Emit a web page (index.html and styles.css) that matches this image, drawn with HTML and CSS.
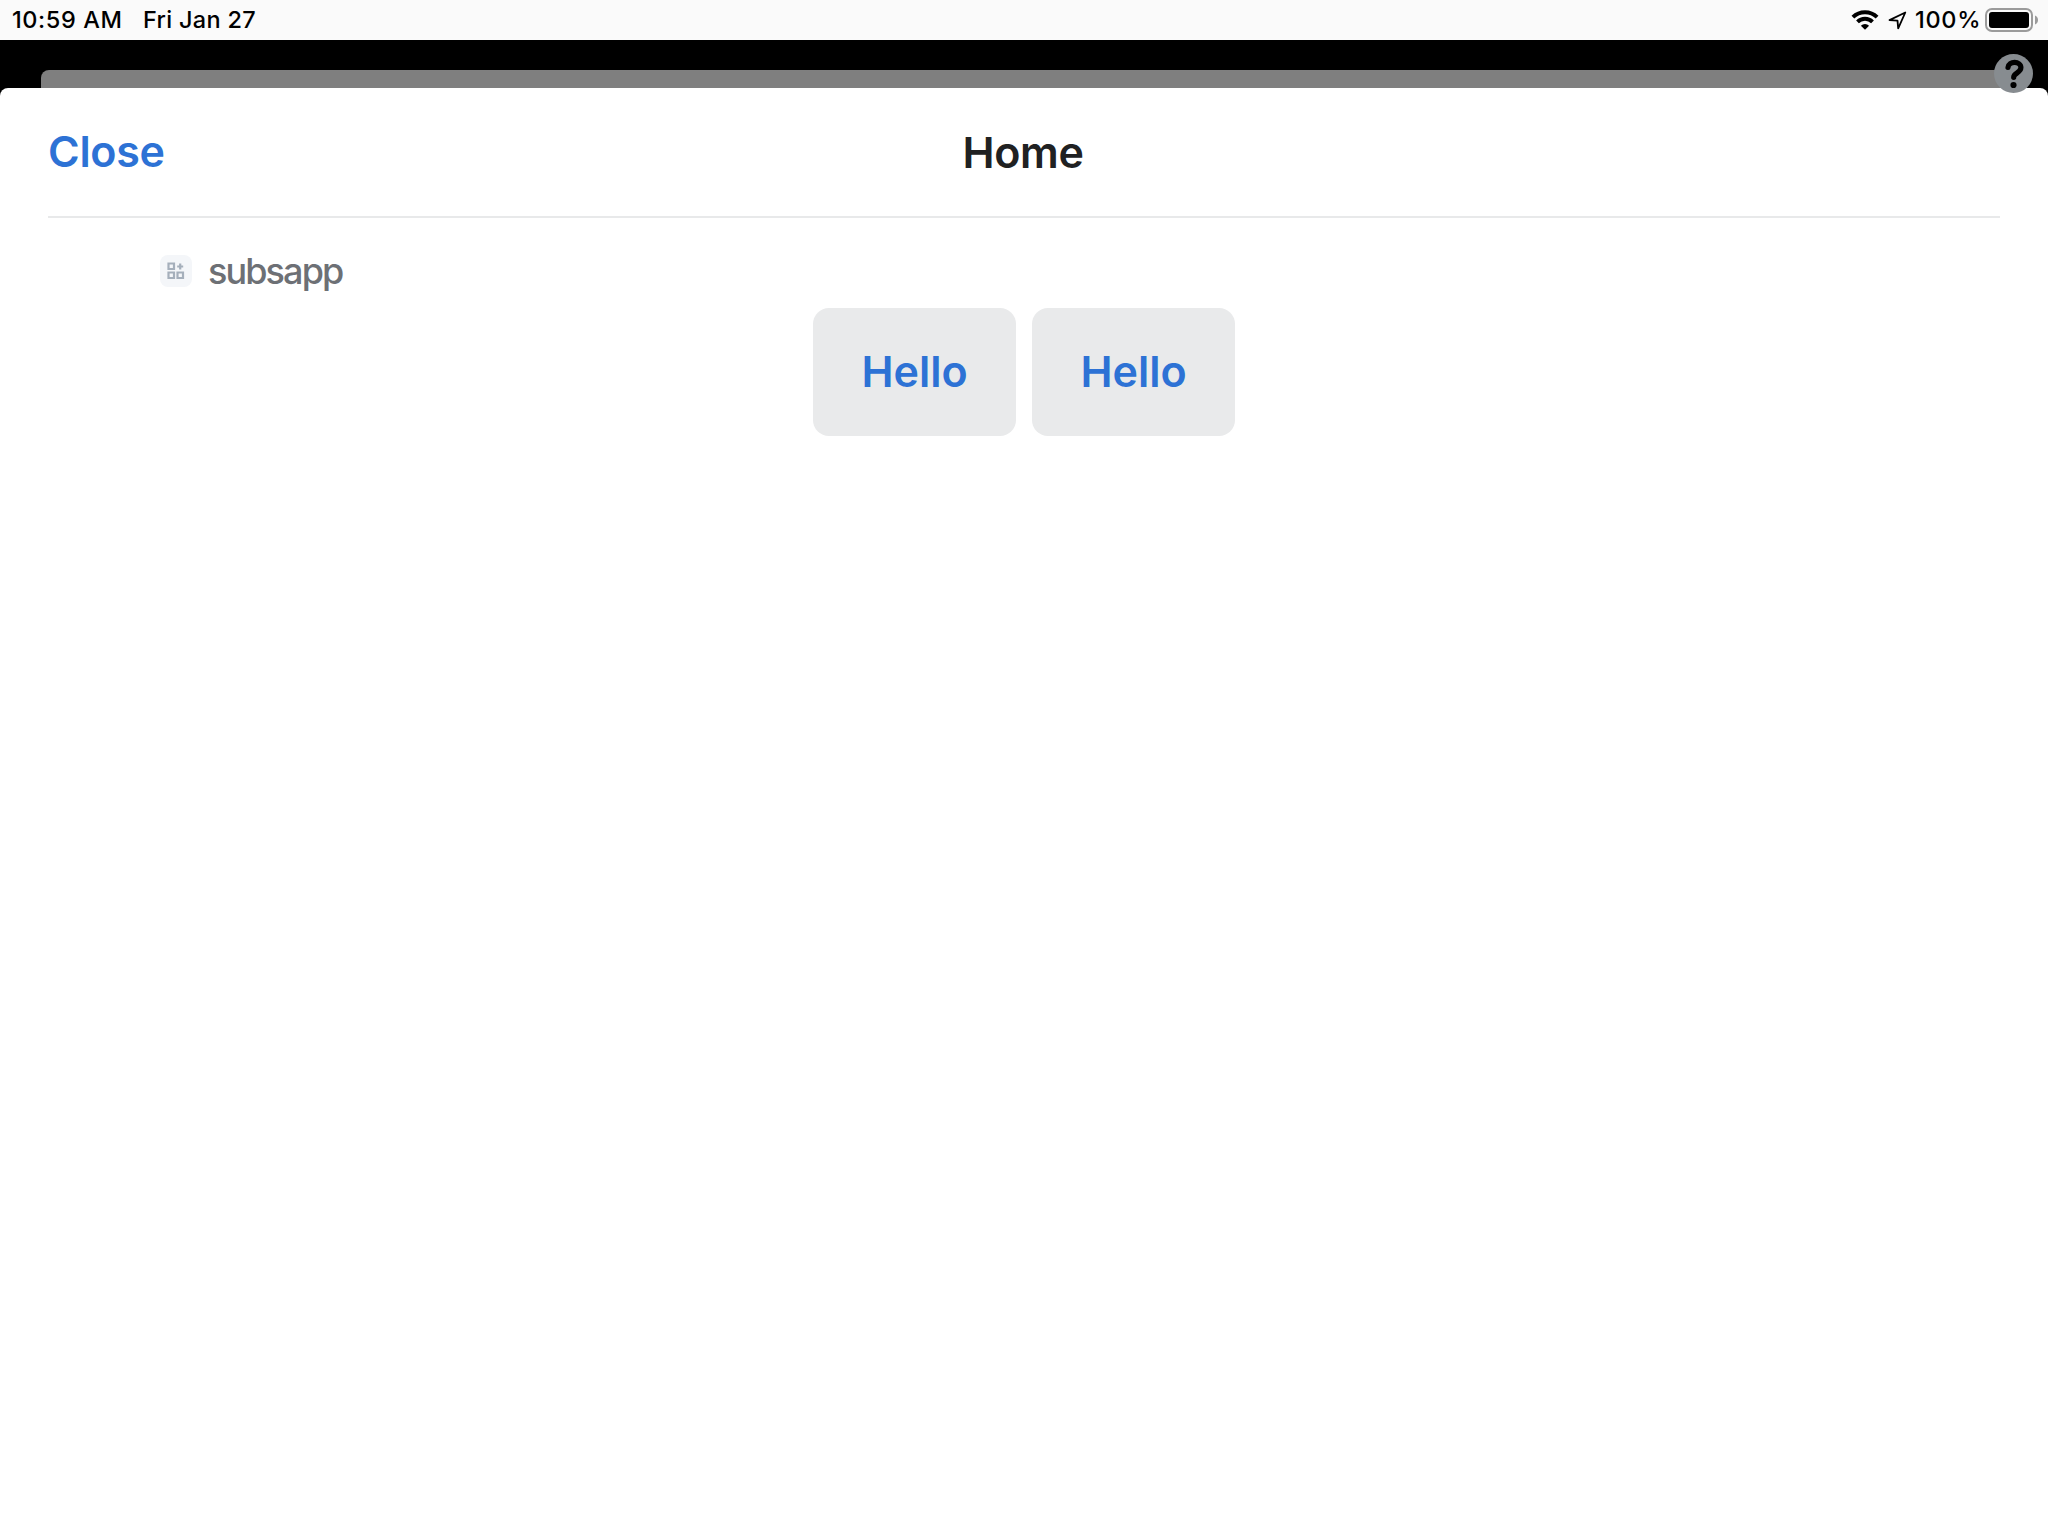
FILE: index.html
```html
<!DOCTYPE html>
<html lang="en">
<head>
<meta charset="utf-8">
<title>Home</title>
<link rel="stylesheet" href="styles.css">
</head>
<body>
<header class="status">
  <span class="time">10:59 AM</span>
  <span class="date">Fri Jan 27</span>
  <svg class="wifi" width="28" height="20" viewBox="0 0 28 20" fill="none" stroke="#000" stroke-width="3.9">
    <path d="M1.9 7.2a17.2 17.2 0 0 1 24.2 0"/>
    <path d="M6.5 11.9a10.6 10.6 0 0 1 15 0"/>
    <path d="M14 19.8l-4.1-4.1a5.8 5.8 0 0 1 8.2 0z" fill="#000" stroke="none"/>
  </svg>
  <svg class="location" width="19" height="19" viewBox="0 0 19 19" fill="none" stroke="#000" stroke-width="1.8" stroke-linejoin="round">
    <path d="M17.3 1.5L1.5 9.1l8 .5.7 7.7z"/>
  </svg>
  <span class="percent">100%</span>
  <svg class="battery" width="53" height="24" viewBox="0 0 53 24">
    <rect x="1" y="1" width="46" height="22" rx="6" fill="none" stroke="#9b9b9b" stroke-width="2"/>
    <rect x="4" y="4" width="40" height="16" rx="3"/>
    <path d="M50 7.500c4 1.500 4 7.500 0 9z" fill="#9b9b9b"/>
  </svg>
</header>
<div class="backdrop">
  <div class="behind"></div>
  <svg class="help" width="39" height="39" viewBox="0 0 39 39">
    <circle cx="19.500" cy="19.500" r="19.500" fill="#878c90"/>
    <path d="M14 13.500C14.500 6.800 26.900 6.700 26.900 13.600c0 5.400-7.200 5.300-7.200 9.700" fill="none" stroke="#000" stroke-width="5.200" stroke-linecap="round"/>
    <circle cx="19.500" cy="31" r="3.100"/>
  </svg>
</div>
<main class="sheet">
  <div class="titlebar">
    <a class="close">Close</a>
    <h1 class="title">Home</h1>
  </div>
  <div class="app">
    <span class="badge">
      <svg width="18" height="18" viewBox="0 0 18 18" fill="none" stroke="#a5afbb" stroke-width="2.200">
        <path d="M1.500 1.500h5.500v5.500h-5.500zM1.500 10.500h5.500v5.500h-5.500zM10.500 10.500h5.500v5.500h-5.500zM13.200 1.500v6M10.200 4.500h6"/>
      </svg>
    </span>
    <span class="app-name">subsapp</span>
  </div>
  <div class="actions">
    <button class="action">Hello</button>
    <button class="action">Hello</button>
  </div>
</main>
</body>
</html>
```
FILE: styles.css
```css
* { box-sizing: border-box; }
body {
  margin: 0;
  height: 1536px;
  display: flex;
  flex-direction: column;
  overflow: hidden;
  background: #000;
  font-family: Inter, "Liberation Sans", sans-serif;
}
.status {
  height: 40px;
  flex: none;
  display: flex;
  align-items: center;
  padding: 0 10px 0 12px;
  background: #fafafa;
  color: #000;
  font-size: 23.5px;
  font-weight: 450;
  line-height: 40px;
  white-space: nowrap;
}
.time { width: 131px; letter-spacing: 0.6px; }
.date { letter-spacing: 0.3px; }
.wifi { margin-left: auto; }
.location { margin-left: 9px; }
.percent { width: 70px; margin-left: 8px; letter-spacing: 0.7px; }
.battery { flex: none; }
.backdrop {
  position: relative;
  flex: none;
  height: 48px;
  padding: 30px 41px 0;
}
.behind {
  height: 18px;
  border-radius: 8px 8px 0 0;
  background: #7f7f7f;
}
.help {
  position: absolute;
  z-index: 1;
  top: 13.5px;
  right: 15px;
}
.sheet {
  flex: 1;
  padding: 0 48px;
  border-radius: 8px 8px 0 0;
  background: #fff;
}
.titlebar {
  height: 130px;
  display: grid;
  grid-template-columns: 1fr auto 1fr;
  align-items: center;
  border-bottom: 2px solid #e8e9ea;
}
.close {
  padding-bottom: 2px;
  color: #2d72d5;
  font-size: 43px;
  font-weight: 600;
  letter-spacing: -0.3px;
}
.title {
  margin: 0;
  padding-right: 2px;
  color: #202122;
  font-size: 43px;
  font-weight: 600;
  letter-spacing: -0.3px;
}
.app {
  height: 90px;
  display: flex;
  align-items: center;
  padding: 16px 112px 0;
  gap: 16px;
}
.badge {
  width: 32px;
  height: 32px;
  display: flex;
  align-items: center;
  justify-content: center;
  border-radius: 8px;
  background: #f4f6f9;
}
.app-name {
  color: #6d7075;
  font-size: 36px;
  font-weight: 450;
  letter-spacing: -1.9px;
}
.actions {
  display: flex;
  justify-content: center;
  gap: 16px;
}
.action {
  width: 203px;
  height: 128px;
  padding: 0 0 2px;
  border: 0;
  border-radius: 16px;
  background: #e9eaeb;
  color: #2d72d5;
  font: 600 43px Inter, "Liberation Sans", sans-serif;
}
```
